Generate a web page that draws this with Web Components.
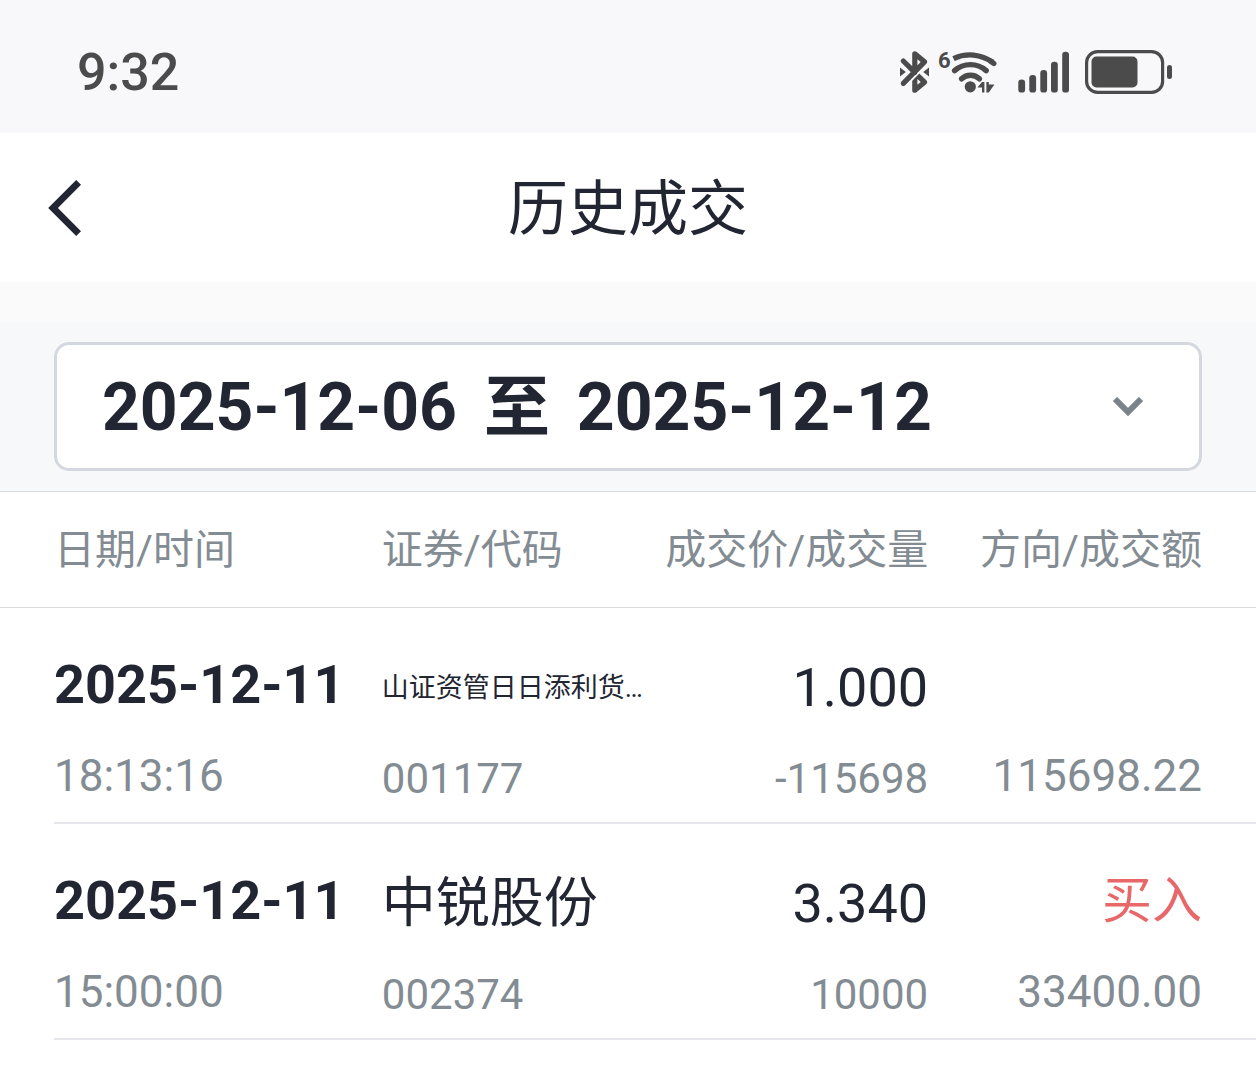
<!DOCTYPE html>
<html lang="zh-CN">
<head>
<meta charset="UTF-8">
<meta name="viewport" content="width=device-width, initial-scale=1">
<title>历史成交</title>
<style>
  body {
    margin: 0;
    background: #fff;
    color: #222632;
    font-family: Roboto, "Noto Sans CJK SC", sans-serif;
    --gutter: 54px;
    --muted: #838c93;
    --panel: #f7f8fa;
  }
</style>
</head>
<body>
<status-bar time="9:32"></status-bar>
<page-header>历史成交</page-header>
<date-range start="2025-12-06" end="2025-12-12"></date-range>
<trade-table></trade-table>

<script>
class StatusBar extends HTMLElement {
  constructor() {
    super();
    this.attachShadow({ mode: 'open' });
  }

  connectedCallback() {
    this.shadowRoot.innerHTML = `
      <style>
        :host {
          display: flex;
          align-items: center;
          justify-content: space-between;
          box-sizing: border-box;
          height: 133px;
          padding: 12px 84px 0 77px;
          background: #f8f8fa;
          color: #4b4b4b;
        }
        .time {
          font-size: 52px;
          font-weight: 500;
          line-height: 64px;
        }
        .icons {
          display: flex;
          align-items: flex-start;
          height: 46px;
        }
        svg {
          display: block;
          overflow: visible;
          fill: currentColor;
        }
        .line {
          fill: none;
          stroke: currentColor;
          stroke-linecap: round;
          stroke-linejoin: round;
        }
        text {
          font: bold 22px Roboto, sans-serif;
        }
      </style>
      <span class="time">${this.getAttribute('time') || ''}</span>
      <div class="icons">
        <svg width="40" height="44" viewBox="898 50 40 44" aria-label="Bluetooth">
          <path class="line" stroke-width="5.2" d="M914.8 74V90.2L924.5 82.2 917 74.8"/>
          <path fill="none" stroke="#f8f8fa" stroke-width="9" d="M926 60.5 903.3 83.3"/>
          <path class="line" stroke-width="5.2" d="M903.3 61 914.8 72.4V53.8L924.5 61.8 903.3 83.3"/>
          <path d="M900 67.6v8.8l5.8-4.4zM929 67.6v8.8l-5.8-4.4z"/>
        </svg>
        <svg width="78" height="44" viewBox="938 50 78 44" aria-label="Wi-Fi 6">
          <text x="938" y="68">6</text>
          <g class="line" stroke-width="5.4">
            <path stroke-linecap="butt" d="M953.5 58.6A38.4 38.4 0 0 1 992.5 62.3"/>
            <path d="M991.5 61.6 993.8 63.5"/>
            <path d="M954.6 70.6A24 24 0 0 1 986.2 70.6"/>
            <path d="M961.6 78.8A13 13 0 0 1 979.4 78.8"/>
          </g>
          <circle cx="970.3" cy="86.8" r="5.6"/>
          <path d="M977.4 87.6 982 82h2.4v10.4H982v-4.8zM986.4 82h2.4v2.6h5.6l-5.6 7.8h-2.4z"/>
        </svg>
        <svg width="69" height="44" viewBox="1016 50 69 44" aria-label="信号">
          <rect x="1018.3" y="79.6" width="6.8" height="13" rx="3.2"/>
          <rect x="1029.3" y="75" width="6.8" height="17.6" rx="3.2"/>
          <rect x="1040.3" y="70" width="6.8" height="22.6" rx="3.2"/>
          <rect x="1051" y="61.7" width="6.8" height="30.9" rx="3.2"/>
          <rect x="1062.2" y="51.7" width="6.8" height="40.9" rx="3.2"/>
        </svg>
        <svg width="87" height="44" viewBox="1085 50 87 44" aria-label="电量">
          <rect class="line" x="1086.6" y="51.6" width="76" height="40.8" rx="11" stroke-width="3.2"/>
          <rect x="1091.5" y="56.5" width="46" height="31" rx="5"/>
          <rect x="1167" y="65" width="5" height="14" rx="2.5"/>
        </svg>
      </div>
    `;
  }
}

class PageHeader extends HTMLElement {
  constructor() {
    super();
    this.attachShadow({ mode: 'open' });
    this.shadowRoot.innerHTML = `
      <style>
        :host {
          display: grid;
          grid-template-columns: 1fr auto 1fr;
          align-items: center;
          height: 149px;
          padding: 0 48px;
          background: #fff;
        }
        button {
          justify-self: start;
          padding: 0;
          border: 0;
          background: none;
          color: inherit;
          cursor: pointer;
        }
        svg {
          display: block;
        }
        h1 {
          margin: 0;
          padding-top: 4px;
          font-size: 60px;
          font-weight: 400;
          line-height: 72px;
        }
      </style>
      <button type="button" aria-label="返回">
        <svg width="34" height="56" viewBox="0 0 34 56" fill="none" stroke="currentColor" stroke-width="6.8">
          <path d="M30.6 2.4 5 28 30.6 53.6"/>
        </svg>
      </button>
      <h1><slot></slot></h1>
    `;
    this.shadowRoot.querySelector('button').addEventListener('click', () => history.back());
  }
}

class DateRange extends HTMLElement {
  constructor() {
    super();
    this.attachShadow({ mode: 'open' });
  }

  connectedCallback() {
    const start = this.getAttribute('start');
    const end = this.getAttribute('end');

    this.shadowRoot.innerHTML = `
      <style>
        :host {
          display: block;
          padding: 20px var(--gutter);
          border-top: 40px solid #fafafa;
          background: var(--panel);
        }
        .field {
          display: grid;
          align-items: center;
        }
        select, svg {
          grid-area: 1 / 1;
        }
        select {
          appearance: none;
          box-sizing: border-box;
          width: 100%;
          height: 129px;
          padding: 2px 90px 0 45px;
          border: 3px solid #d3d8df;
          border-radius: 15px;
          background: #fff;
          color: inherit;
          font-family: inherit;
          font-size: 66px;
          font-weight: 700;
        }
        svg {
          justify-self: end;
          margin-right: 58px;
          color: #7a838a;
          pointer-events: none;
        }
      </style>
      <div class="field">
        <select aria-label="日期范围">
          <option>${start}&thinsp;&thinsp;至&thinsp;&thinsp;${end}</option>
        </select>
        <svg width="32" height="20" viewBox="0 0 32 20" fill="none" stroke="currentColor" stroke-width="6">
          <path d="M3 2 16 15 29 2"/>
        </svg>
      </div>
    `;
  }
}

// Two stacked lines of one table cell
class TradeCell extends HTMLElement {
  constructor() {
    super();
    this.attachShadow({ mode: 'open' });
    this.shadowRoot.innerHTML = `
      <style>
        :host {
          display: grid;
          grid-template-rows: 72px 56px;
          row-gap: 27px;
          font-size: 54px;
          line-height: 72px;
          white-space: nowrap;
        }
        .sub {
          color: var(--muted);
          font-size: var(--sub-size, 44px);
          line-height: 56px;
        }
      </style>
      <div><slot></slot></div>
      <div class="sub"><slot name="sub"></slot></div>
    `;
  }
}

class TradeTable extends HTMLElement {
  constructor() {
    super();
    this.attachShadow({ mode: 'open' });
    this.trades = [
      { date: '2025-12-11', time: '18:13:16', name: '山证资管日日添利货…', code: '001177', price: '1.000', volume: '-115698', side: '', amount: '115698.22' },
      { date: '2025-12-11', time: '15:00:00', name: '中锐股份', code: '002374', price: '3.340', volume: '10000', side: '买入', amount: '33400.00' }
    ];
  }

  connectedCallback() {
    this.render();
  }

  renderRow(trade) {
    const long = trade.name.length > 5 ? 'long' : '';
    return `
      <tr>
        <td><trade-cell><b>${trade.date}</b><span slot="sub">${trade.time}</span></trade-cell></td>
        <td class="mid"><trade-cell><span class="${long}">${trade.name}</span><span slot="sub">${trade.code}</span></trade-cell></td>
        <td class="mid num"><trade-cell>${trade.price}<span slot="sub">${trade.volume}</span></trade-cell></td>
        <td class="num"><trade-cell><span class="buy">${trade.side}</span><span slot="sub">${trade.amount}</span></trade-cell></td>
      </tr>
    `;
  }

  render() {
    this.shadowRoot.innerHTML = `
      <style>
        :host {
          display: block;
        }
        table {
          width: 100%;
          table-layout: fixed;
          border-collapse: separate;
          border-spacing: 0;
        }
        th {
          height: 115px;
          padding: 0;
          border: solid #d8dadd;
          border-width: 1px 0;
          color: var(--muted);
          font-size: 41px;
          font-weight: 400;
          line-height: 56px;
          text-align: left;
          white-space: nowrap;
        }
        td {
          padding: 41px 0 20px;
          background: linear-gradient(#e6e6ec, #e6e6ec) 0 100% / 100% 2px no-repeat;
          vertical-align: top;
        }
        th:first-child, td:first-child {
          padding-left: var(--gutter);
        }
        td:first-child {
          background-position: var(--gutter) 100%;
        }
        th:last-child, td:last-child {
          padding-right: var(--gutter);
        }
        .mid {
          --sub-size: 42px;
          padding: 44px 0 17px;
        }
        .num {
          text-align: right;
        }
        .long {
          display: block;
          font-size: 27px;
        }
        .buy {
          display: block;
          color: #e8686a;
          font-size: 50px;
        }
      </style>
      <table>
        <colgroup>
          <col style="width: 30.4%">
          <col style="width: 21.7%">
          <col style="width: 21.8%">
          <col>
        </colgroup>
        <thead>
          <tr>
            <th scope="col">日期/时间</th>
            <th scope="col">证券/代码</th>
            <th scope="col" class="num">成交价/成交量</th>
            <th scope="col" class="num">方向/成交额</th>
          </tr>
        </thead>
        <tbody>${this.trades.map(trade => this.renderRow(trade)).join('')}</tbody>
      </table>
    `;
  }
}

customElements.define('status-bar', StatusBar);
customElements.define('page-header', PageHeader);
customElements.define('date-range', DateRange);
customElements.define('trade-cell', TradeCell);
customElements.define('trade-table', TradeTable);
</script>
</body>
</html>
